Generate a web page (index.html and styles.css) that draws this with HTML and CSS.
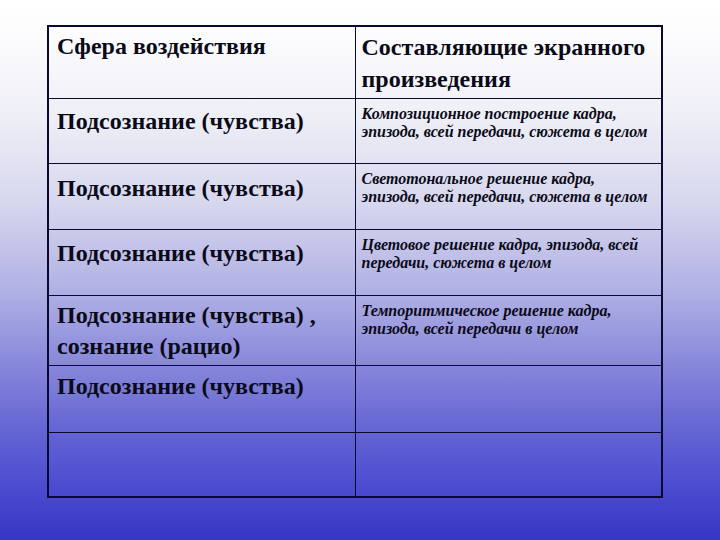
FILE: index.html
```html
<!DOCTYPE html>
<html lang="ru">
<head>
<meta charset="utf-8">
<title>Сфера воздействия</title>
<link rel="stylesheet" href="styles.css">
</head>
<body>
<div class="slide">
  <table class="grid">
    <colgroup>
      <col class="col-a">
      <col class="col-b">
    </colgroup>
    <tr class="r-head">
      <td class="c-left">Сфера воздействия</td>
      <td class="c-right head">Составляющие экранного произведения</td>
    </tr>
    <tr class="r1">
      <td class="c-left">Подсознание (чувства)</td>
      <td class="c-right note">Композиционное построение кадра,<br>эпизода, всей передачи, сюжета в целом</td>
    </tr>
    <tr class="r2">
      <td class="c-left">Подсознание (чувства)</td>
      <td class="c-right note">Светотональное решение кадра,<br>эпизода, всей передачи, сюжета в целом</td>
    </tr>
    <tr class="r3">
      <td class="c-left">Подсознание (чувства)</td>
      <td class="c-right note">Цветовое решение кадра, эпизода, всей<br>передачи, сюжета в целом</td>
    </tr>
    <tr class="r4">
      <td class="c-left">Подсознание (чувства) , сознание (рацио)</td>
      <td class="c-right note">Темпоритмическое решение кадра,<br>эпизода, всей передачи в целом</td>
    </tr>
    <tr class="r5">
      <td class="c-left">Подсознание (чувства)</td>
      <td class="c-right note"></td>
    </tr>
    <tr class="r6">
      <td class="c-left"></td>
      <td class="c-right note"></td>
    </tr>
  </table>
</div>
</body>
</html>
```

FILE: styles.css
```css
html, body {
  margin: 0;
  padding: 0;
}
body {
  width: 720px;
  height: 540px;
  overflow: hidden;
  background: linear-gradient(to bottom,
    #ffffff 0%,
    #fbfbfd 8%,
    #eeeef6 22%,
    #d6d6ee 38%,
    #b0b0e4 54%,
    #8c8cdc 66%,
    #6666d4 79%,
    #4c4cd0 90%,
    #3636c4 100%);
  font-family: "Liberation Serif", "Times New Roman", serif;
  color: #0a0a18;
}
.slide {
  padding: 25px 0 0 47px;
}
.grid {
  border-collapse: collapse;
  width: 614px;
  table-layout: fixed;
  border: 2px solid #0a0a30;
}
.col-a { width: 307px; }
.col-b { width: 307px; }
.grid td {
  border: 1px solid #0a0a30;
  vertical-align: top;
  padding: 0;
}
.c-left {
  font-weight: bold;
  font-size: 24px;
  line-height: 31px;
  padding: 4px 4px 0 8px !important;
}
.c-right {
  padding: 4px 4px 0 6px !important;
}
.head {
  font-weight: bold;
  font-size: 24px;
  line-height: 32px;
}
.note {
  font-weight: bold;
  font-style: italic;
  font-size: 16px;
  line-height: 18px;
  white-space: nowrap;
  padding: 6px 2px 0 6px !important;
}
.r1 td.c-left { padding-top: 7px !important; }
.r2 td.c-left { padding-top: 9px !important; }
.r3 td.c-left { padding-top: 8px !important; }
.r4 td.c-left { padding-top: 4px !important; }
.r5 td.c-left { padding-top: 5px !important; }
.r-head { height: 72px; }
.r1 { height: 65px; }
.r2 { height: 66px; }
.r3 { height: 66px; }
.r4 { height: 70px; }
.r5 { height: 67px; }
.r6 { height: 65px; }
```
